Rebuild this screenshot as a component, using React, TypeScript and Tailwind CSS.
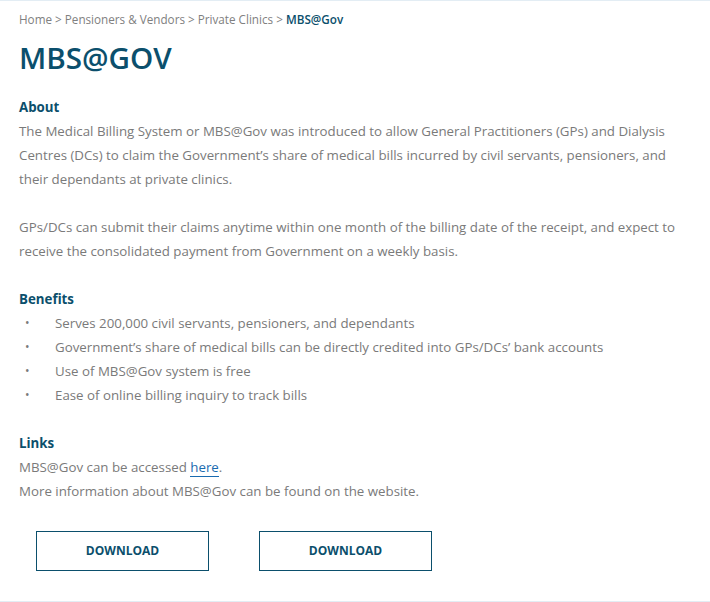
export default function App() {
  const benefits = [
    "Serves 200,000 civil servants, pensioners, and dependants",
    "Government\u2019s share of medical bills can be directly credited into GPs/DCs\u2019 bank accounts",
    "Use of MBS@Gov system is free",
    "Ease of online billing inquiry to track bills",
  ];

  return (
    <div
      className="w-[710px] h-[602px] bg-white border-t border-b border-[#e3edf4] overflow-hidden"
      style={{ fontFamily: '"Open Sans", "Noto Sans", Arial, sans-serif' }}
    >
      <div className="pl-[19px] pr-[24px] pt-[9px]">
        <nav className="text-[11.7px] leading-[18px] text-[#808080]">
          Home &gt; Pensioners &amp; Vendors &gt; Private Clinics &gt;{" "}
          <span className="font-semibold text-[#0b4f6c]">MBS@Gov</span>
        </nav>

        <h1 className="mt-[10px] text-[29.6px] leading-[40px] font-semibold text-[#0b4f6c]">
          MBS@GOV
        </h1>

        <div className="mt-[17px] text-[13.3px] leading-[24px] text-[#7a7a7a]">
          <h2 className="font-bold text-[#0b4f6c]">About</h2>
          <p>
            The Medical Billing System or MBS@Gov was introduced to allow General Practitioners (GPs) and Dialysis
            Centres (DCs) to claim the Government&rsquo;s share of medical bills incurred by civil servants, pensioners, and
            their dependants at private clinics.
          </p>
          <p className="mt-6">
            GPs/DCs can submit their claims anytime within one month of the billing date of the receipt, and expect to
            receive the consolidated payment from Government on a weekly basis.
          </p>

          <h2 className="mt-6 font-bold text-[#0b4f6c]">Benefits</h2>
          <ul>
            {benefits.map((b) => (
              <li key={b} className="flex">
                <span className="w-9 shrink-0 pl-[6px] text-[12px]">&bull;</span>
                <span>{b}</span>
              </li>
            ))}
          </ul>

          <h2 className="mt-6 font-bold text-[#0b4f6c]">Links</h2>
          <p>
            MBS@Gov can be accessed{" "}
            <a href="#" className="text-[#1a6bb0] border-b border-[#1a6bb0]">
              here
            </a>
            .
          </p>
          <p>More information about MBS@Gov can be found on the website.</p>
        </div>

        <div className="mt-[28px] flex gap-[50px] pl-[17px]">
          <button className="w-[173px] h-[40px] border border-[#0b4f6c] text-[12px] font-bold text-[#0b4f6c]">
            DOWNLOAD
          </button>
          <button className="w-[173px] h-[40px] border border-[#0b4f6c] text-[12px] font-bold text-[#0b4f6c]">
            DOWNLOAD
          </button>
        </div>
      </div>
    </div>
  );
}
